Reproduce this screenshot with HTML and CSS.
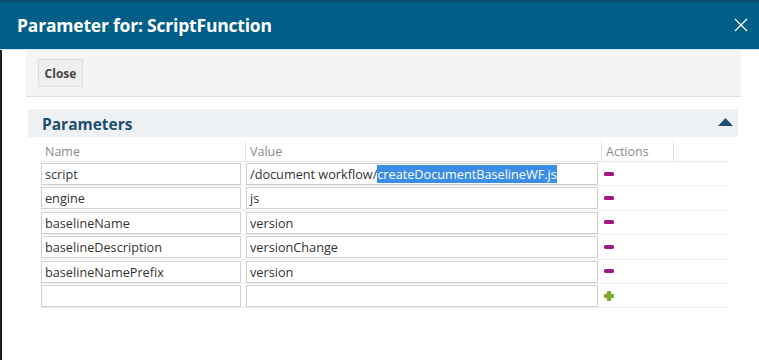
FILE: index.html
```html
<!DOCTYPE html>
<html>
<head>
<meta charset="utf-8">
<link rel="stylesheet" href="styles.css">
</head>
<body>
<div class="dialog">
  <header class="titlebar">
    <h1 class="title">Parameter for: ScriptFunction</h1>
    <button class="xbtn" aria-label="close">
      <svg width="14" height="14" viewBox="0 0 14 14"><path d="M1 1 L13 13 M13 1 L1 13" stroke="#fff" stroke-width="1.3" fill="none"/></svg>
    </button>
  </header>
  <div class="content">
    <div class="toolbar"><button class="btn">Close</button></div>
    <section class="params">
      <div class="sec-head">
        <span class="sec-title">Parameters</span>
        <svg class="caret" width="15" height="8" viewBox="0 0 15 8"><path d="M0 8 L7.5 0 L15 8 Z" fill="#1b4f7a"/></svg>
      </div>
      <div class="grid">
        <div class="hrow">
          <div class="hcell c-name">Name</div>
          <div class="hcell c-val sep">Value</div>
          <div class="hcell c-act sep">Actions</div>
          <div class="hcell c-pad sep"></div>
        </div>
        <div class="row">
          <div class="cell"><div class="inp name">script</div></div>
          <div class="cell"><div class="inp val">/document workflow/<span class="sel">createDocumentBaselineWF.js</span></div></div>
          <div class="cell act"><span class="minus"></span></div>
          <div class="cell"></div>
        </div>
        <div class="row">
          <div class="cell"><div class="inp name">engine</div></div>
          <div class="cell"><div class="inp val">js</div></div>
          <div class="cell act"><span class="minus"></span></div>
          <div class="cell"></div>
        </div>
        <div class="row">
          <div class="cell"><div class="inp name">baselineName</div></div>
          <div class="cell"><div class="inp val">version</div></div>
          <div class="cell act"><span class="minus"></span></div>
          <div class="cell"></div>
        </div>
        <div class="row">
          <div class="cell"><div class="inp name">baselineDescription</div></div>
          <div class="cell"><div class="inp val">versionChange</div></div>
          <div class="cell act"><span class="minus"></span></div>
          <div class="cell"></div>
        </div>
        <div class="row">
          <div class="cell"><div class="inp name">baselineNamePrefix</div></div>
          <div class="cell"><div class="inp val">version</div></div>
          <div class="cell act"><span class="minus"></span></div>
          <div class="cell"></div>
        </div>
        <div class="row">
          <div class="cell"><div class="inp name"></div></div>
          <div class="cell"><div class="inp val"></div></div>
          <div class="cell act">
            <svg class="plus" width="10" height="10" viewBox="0 0 10 10"><path d="M3.3 0.5 H6.7 V3.3 H9.5 V6.7 H6.7 V9.5 H3.3 V6.7 H0.5 V3.3 H3.3 Z" fill="#7aa62a" stroke="#7aa62a" stroke-width="0.8" stroke-linejoin="round"/></svg>
          </div>
          <div class="cell"></div>
        </div>
      </div>
    </section>
  </div>
</div>
</body>
</html>
```
FILE: styles.css
```css
* { box-sizing: border-box; }
html, body { margin: 0; padding: 0; background: #fff; }
body {
  font-family: "Open Sans", "Noto Sans", sans-serif;
  width: 759px;
  height: 360px;
  overflow: hidden;
}
.dialog { display: flex; flex-direction: column; height: 360px; }
.titlebar {
  height: 50px;
  background: #015e86;
  border-top: 2px solid #0b4e6f;
  border-bottom: 1px solid #cfe5ee;
  display: flex;
  align-items: center;
  justify-content: space-between;
  padding: 0 10px 0 17px;
}
.title {
  margin: 0;
  color: #fff;
  font-size: 17.5px;
  font-weight: 700;
  letter-spacing: -0.2px;
  padding-bottom: 2px;
}
.xbtn {
  background: none; border: 0; padding: 0; margin: 0 1px 2px 0;
  width: 14px; height: 14px; display: flex;
}
.content {
  flex: 1;
  border-left: 2px solid #1c1c1c;
  padding: 0 18px 0 24px;
}
.toolbar {
  height: 47px;
  background: #f4f4f4;
  border-bottom: 1px solid #dedede;
  padding: 9px 0 0 12px;
}
.btn {
  height: 28px;
  width: 45px;
  padding: 0;
  border: 1px solid #dcdcdc;
  background: #efefef;
  color: #444;
  font-family: inherit;
  font-size: 12px;
  font-weight: 700;
  border-radius: 1px;
}
.params { margin-top: 12px; padding: 0 3px 0 2px; }
.sec-head {
  height: 28px;
  background: #eef1f4;
  display: flex;
  align-items: center;
  justify-content: space-between;
  padding: 0 5px 0 14px;
}
.sec-title {
  color: #1e4e6f;
  font-size: 15.5px;
  font-weight: 700;
  padding-top: 2px;
}
.caret { margin-bottom: 3px; }
.grid { margin-left: 13px; width: 687px; margin-top: 3px; }
.hrow, .row {
  display: grid;
  grid-template-columns: 204px 356px 72px 55px;
}
.hrow { height: 22px; border-bottom: 1px solid #e8e8e8; }
.hcell {
  font-size: 12.5px;
  color: #8a8a8a;
  padding-left: 4px;
  line-height: 20px;
  height: 20px;
  margin-top: 2px;
}
.hcell.sep { border-left: 1px solid #e2e2e2; padding-left: 4px; }
.row { height: 24.4px; border-bottom: 1px solid #eeeeee; }
.cell { padding-top: 1px; }
.inp {
  height: 22px;
  border: 1px solid #cfcfcf;
  font-size: 12.7px;
  color: #333;
  line-height: 20px;
  padding-left: 3px;
  white-space: nowrap;
  overflow: hidden;
}
.inp.name { width: 200px; }
.inp.val { width: 352px; margin-left: 1px; }
.sel { background: #3a8ee6; color: #fff; display: inline-block; line-height: 18px; }
.act { display: flex; align-items: center; padding-left: 3px; padding-top: 0; }
.minus {
  display: block;
  width: 10px;
  height: 4px;
  border-radius: 1.5px;
  background: #a3167f;
}
.plus { display: block; }
```
